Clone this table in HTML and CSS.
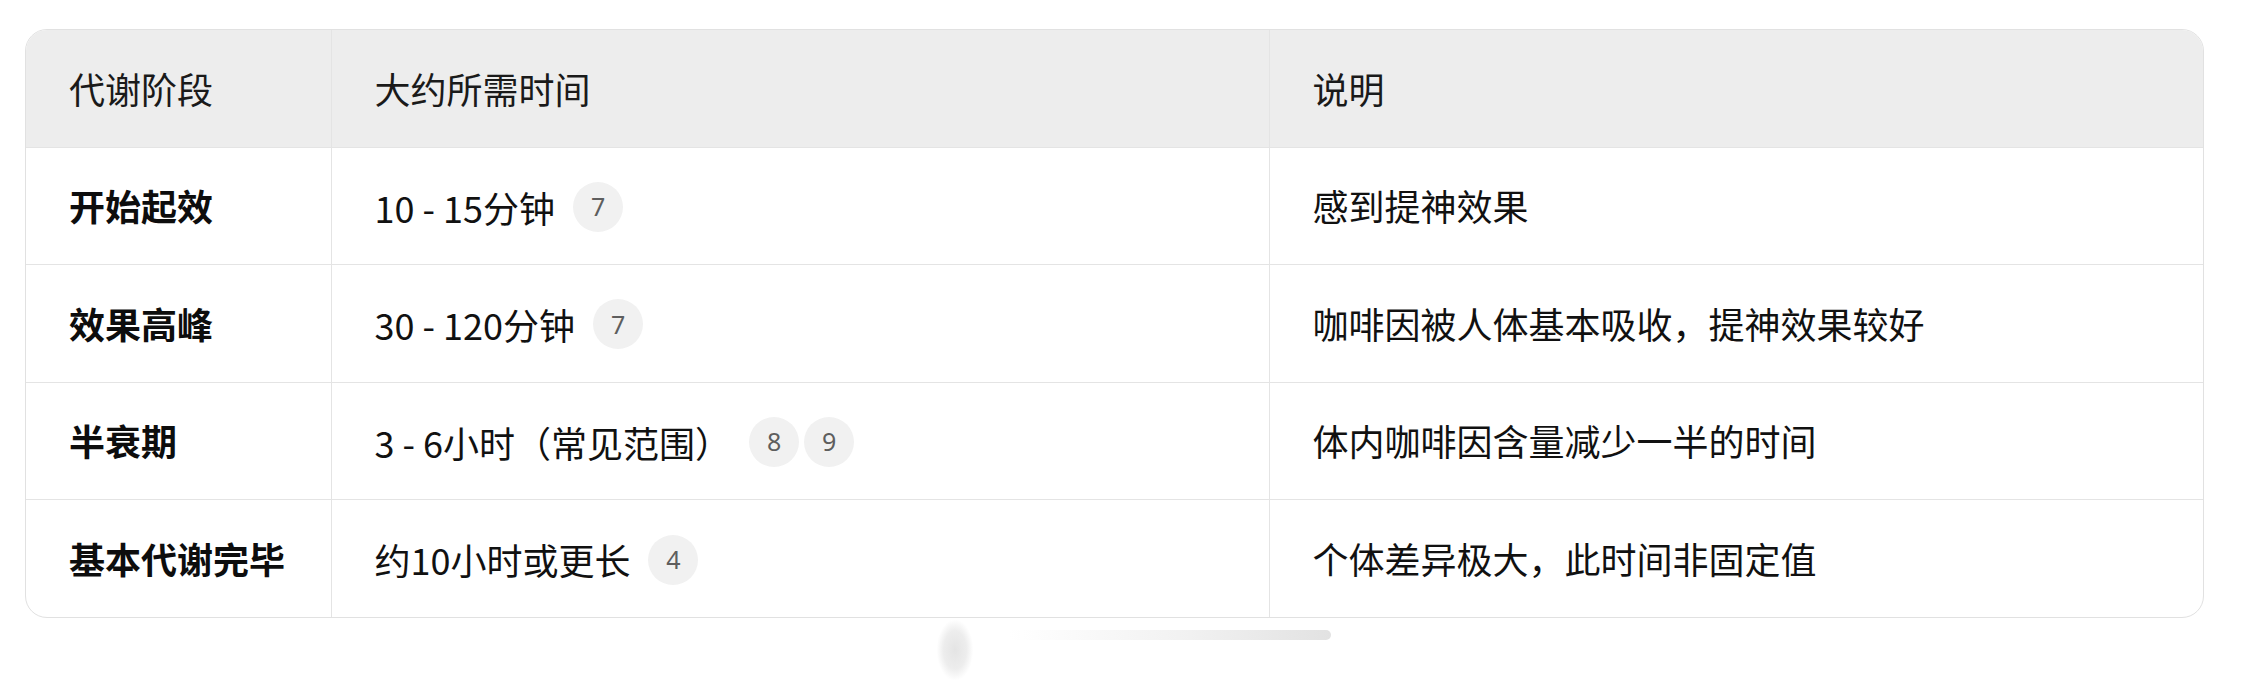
FILE: index.html
```html
<!DOCTYPE html>
<html lang="zh-CN">
<head>
<meta charset="utf-8">
<title>咖啡因代谢</title>
<link rel="stylesheet" href="styles.css">
</head>
<body>
<div class="page">
  <div class="table-box">
    <table class="grid">
      <colgroup>
        <col class="c1">
        <col class="c2">
        <col class="c3">
      </colgroup>
      <thead>
        <tr class="head">
          <th>代谢阶段</th>
          <th>大约所需时间</th>
          <th>说明</th>
        </tr>
      </thead>
      <tbody>
        <tr>
          <td class="stage">开始起效</td>
          <td><span class="time">10 - 15分钟</span><span class="refs"><span class="badge">7</span></span></td>
          <td>感到提神效果</td>
        </tr>
        <tr>
          <td class="stage">效果高峰</td>
          <td><span class="time">30 - 120分钟</span><span class="refs"><span class="badge">7</span></span></td>
          <td>咖啡因被人体基本吸收，提神效果较好</td>
        </tr>
        <tr>
          <td class="stage">半衰期</td>
          <td><span class="time">3 - 6小时（常见范围）</span><span class="refs"><span class="badge">8</span><span class="badge">9</span></span></td>
          <td>体内咖啡因含量减少一半的时间</td>
        </tr>
        <tr>
          <td class="stage">基本代谢完毕</td>
          <td><span class="time">约10小时或更长</span><span class="refs"><span class="badge">4</span></span></td>
          <td>个体差异极大，此时间非固定值</td>
        </tr>
      </tbody>
    </table>
  </div>
  <div class="ghost" aria-hidden="true">
    <div class="ghost-blob"></div>
    <div class="ghost-bar"></div>
  </div>
</div>
</body>
</html>
```
FILE: styles.css
```css
html, body {
  margin: 0;
  padding: 0;
  background: #ffffff;
}

body {
  font-family: "Noto Sans CJK SC", "Noto Sans", sans-serif;
  color: #111111;
}

.page {
  padding: 29px 48px 0 25px;
}

.table-box {
  border: 1px solid #e1e1e1;
  border-radius: 22px;
  overflow: hidden;
  background: #ffffff;
}

.grid {
  width: 100%;
  border-collapse: collapse;
  table-layout: fixed;
  font-size: 36px;
}

.c1 { width: 305px; }
.c2 { width: 938px; }

.grid th,
.grid td {
  padding: 0 0 0 43px;
  text-align: left;
  vertical-align: middle;
  border-right: 1px solid #e4e4e4;
  border-bottom: 1px solid #e4e4e4;
  line-height: 1.2;
  white-space: nowrap;
}

.grid th:last-child,
.grid td:last-child {
  border-right: none;
}

.grid tbody tr:last-child td {
  border-bottom: none;
}

.head {
  height: 117px;
  background: #ededed;
}

.head th {
  font-weight: 400;
  color: #1a1a1a;
}

.grid tbody tr {
  height: 117.5px;
}

.stage {
  font-weight: 700;
  color: #0d0d0d;
}

.time {
  vertical-align: middle;
}

.refs {
  display: inline-flex;
  gap: 5px;
  margin-left: 18px;
  vertical-align: middle;
}

.badge {
  display: inline-flex;
  align-items: center;
  justify-content: center;
  width: 50px;
  height: 50px;
  border-radius: 50%;
  background: #f1f1f1;
  color: #5e5e5e;
  font-size: 25px;
  font-family: "Noto Sans", "Noto Sans CJK SC", sans-serif;
  line-height: 1;
}

.ghost {
  display: flex;
  align-items: flex-start;
  gap: 36px;
  margin: 2px 0 0 912px;
  width: 410px;
  height: 64px;
}

.ghost-blob {
  flex: none;
  width: 36px;
  height: 60px;
  background: radial-gradient(ellipse at center, #e4e4e4 0%, #ededed 45%, rgba(255,255,255,0) 72%);
}

.ghost-bar {
  flex: none;
  margin-top: 10px;
  width: 322px;
  height: 10px;
  border-radius: 5px;
  background: linear-gradient(90deg, rgba(245,245,245,0) 0%, rgba(238,238,238,0.8) 55%, #e2e2e2 100%);
}
```
